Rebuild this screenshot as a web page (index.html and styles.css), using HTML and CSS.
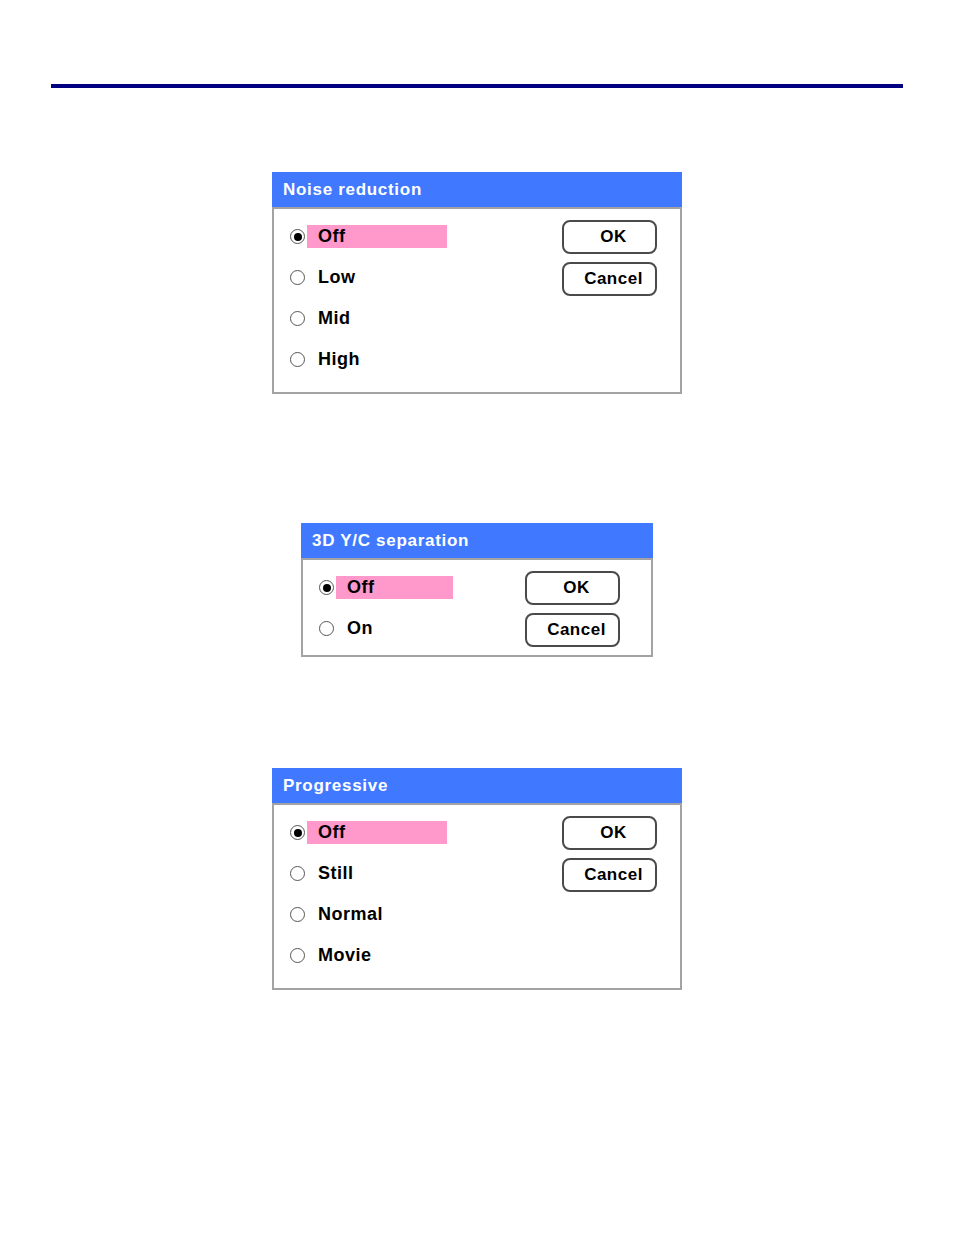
FILE: index.html
```html
<!DOCTYPE html>
<html lang="en">
<head>
  <meta charset="UTF-8">
  <title>Picture options</title>
  <link rel="stylesheet" href="styles.css">
</head>
<body>
  <div class="rule"></div>

  <div class="dialog dialog-wide first">
    <div class="dialog-title">Noise reduction</div>
    <div class="dialog-body">
      <ul class="options">
        <li class="option selected"><span class="radio"></span><span class="label">Off</span></li>
        <li class="option"><span class="radio"></span><span class="label">Low</span></li>
        <li class="option"><span class="radio"></span><span class="label">Mid</span></li>
        <li class="option"><span class="radio"></span><span class="label">High</span></li>
      </ul>
      <div class="buttons">
        <button class="btn">OK</button>
        <button class="btn">Cancel</button>
      </div>
    </div>
  </div>

  <div class="dialog dialog-narrow second">
    <div class="dialog-title">3D Y/C separation</div>
    <div class="dialog-body">
      <ul class="options">
        <li class="option selected"><span class="radio"></span><span class="label">Off</span></li>
        <li class="option"><span class="radio"></span><span class="label">On</span></li>
      </ul>
      <div class="buttons">
        <button class="btn">OK</button>
        <button class="btn">Cancel</button>
      </div>
    </div>
  </div>

  <div class="dialog dialog-wide third">
    <div class="dialog-title">Progressive</div>
    <div class="dialog-body">
      <ul class="options">
        <li class="option selected"><span class="radio"></span><span class="label">Off</span></li>
        <li class="option"><span class="radio"></span><span class="label">Still</span></li>
        <li class="option"><span class="radio"></span><span class="label">Normal</span></li>
        <li class="option"><span class="radio"></span><span class="label">Movie</span></li>
      </ul>
      <div class="buttons">
        <button class="btn">OK</button>
        <button class="btn">Cancel</button>
      </div>
    </div>
  </div>
</body>
</html>
```

FILE: styles.css
```css
html, body {
  margin: 0;
  padding: 0;
  background: #ffffff;
  font-family: 'Liberation Sans', Arial, sans-serif;
}

.rule {
  height: 4px;
  margin: 84px 51px 0 51px;
  background-color: #000080;
}

.dialog {
  margin: 0 auto;
}

.dialog-wide {
  width: 410px;
}

.dialog-narrow {
  width: 352px;
}

.first {
  margin-top: 84px;
}

.second {
  margin-top: 129px;
}

.third {
  margin-top: 111px;
}

.dialog-title {
  height: 35px;
  display: flex;
  align-items: center;
  padding-left: 11px;
  background-color: #4079ff;
  color: white;
  font-size: 17px;
  font-weight: bold;
  letter-spacing: 0.7px;
}

.dialog-body {
  display: flex;
  align-items: flex-start;
  border: 2px solid #a3a3a3;
  padding: 7px 23px 0 16px;
  background: white;
}

.dialog-narrow .dialog-body {
  padding-right: 31px;
}

.options {
  list-style: none;
  margin: 0;
  padding: 0 0 12px 0;
}

.dialog-narrow .options {
  padding-bottom: 6px;
}

.option {
  height: 41px;
  display: flex;
  align-items: center;
}

.radio {
  width: 15px;
  height: 15px;
  box-sizing: border-box;
  border: 1.5px solid #555;
  border-radius: 50%;
  margin-right: 2px;
  display: flex;
  align-items: center;
  justify-content: center;
}

.selected .radio::after {
  content: "";
  width: 8px;
  height: 8px;
  border-radius: 50%;
  background: #000;
}

.label {
  height: 23px;
  width: 140px;
  box-sizing: border-box;
  padding-left: 11px;
  display: flex;
  align-items: center;
  font-size: 18px;
  font-weight: bold;
  letter-spacing: 0.5px;
  color: #000;
}

.dialog-narrow .label {
  width: 117px;
}

.selected .label {
  background-color: #ff99cc;
}

.buttons {
  margin-left: auto;
  padding-top: 4px;
  display: flex;
  flex-direction: column;
  gap: 8px;
}

.btn {
  width: 95px;
  height: 34px;
  box-sizing: border-box;
  border: 2px solid #4a4a4a;
  border-radius: 8px;
  background: white;
  padding: 0 0 0 8px;
  font-family: 'Liberation Sans', Arial, sans-serif;
  font-size: 17px;
  font-weight: bold;
  letter-spacing: 0.5px;
  color: #000;
}
```
